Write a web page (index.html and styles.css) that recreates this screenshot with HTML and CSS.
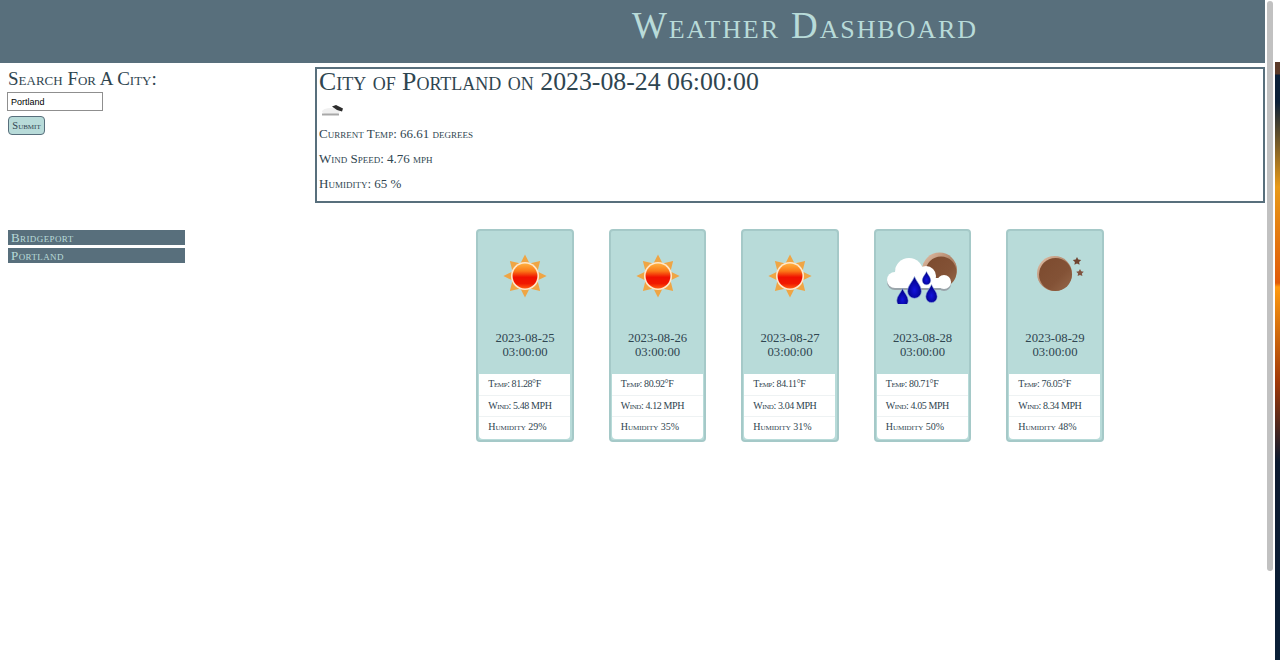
FILE: index.html
```html
<!DOCTYPE html>
<html lang="en">
<head>
<meta charset="utf-8">
<title>Weather Dashboard</title>
<link rel="stylesheet" href="styles.css">
</head>
<body>
<svg class="defs" width="0" height="0" aria-hidden="true">
  <defs>
    <linearGradient id="ball" x1="0" y1="0" x2="0" y2="1"><stop offset="0" stop-color="#ffb040"/><stop offset=".3" stop-color="#fb7a18"/><stop offset=".55" stop-color="#f01000"/><stop offset=".8" stop-color="#f01800"/><stop offset="1" stop-color="#ff5a10"/></linearGradient>
    <linearGradient id="moon" x1="0" y1="0" x2="1" y2="1"><stop offset="0" stop-color="#7c4a2e"/><stop offset=".6" stop-color="#835236"/><stop offset="1" stop-color="#96684a"/></linearGradient>
    <linearGradient id="moonrim" x1="0" y1="0" x2="1" y2="1"><stop offset="0" stop-color="#e6c4ac"/><stop offset=".5" stop-color="#b08468"/><stop offset="1" stop-color="#a87c60"/></linearGradient>
    <radialGradient id="drop" cx="50%" cy="62%" r="55%"><stop offset="0" stop-color="#1414dc"/><stop offset=".7" stop-color="#0606a0"/><stop offset="1" stop-color="#000078"/></radialGradient>
    <path id="tear" d="M0-10C2-5 6-2 6 3A6 6 0 0 1-6 3C-6-2-2-5 0-10z" fill="url(#drop)" stroke="#8fa8e0" stroke-width=".6"/>
    <symbol id="sun" viewBox="0 0 50 50">
      <g fill="#efa544">
        <path d="M25 5l4.500 9h-9z"/><path d="M25 45l4.500-9h-9z"/><path d="M5 25l9-4.500v9z"/><path d="M45 25l-9-4.500v9z"/>
        <path d="M11 11l10 2.500-7.500 7.500z"/><path d="M39 11l-10 2.500 7.500 7.500z"/><path d="M11 39l10-2.500-7.500-7.500z"/><path d="M39 39l-10-2.500 7.500-7.500z"/>
      </g>
      <circle cx="25" cy="25" r="13" fill="#ffe8cc"/>
      <circle cx="25" cy="25" r="11.500" fill="url(#ball)"/>
    </symbol>
    <symbol id="rain" viewBox="0 0 74 56">
      <circle cx="54.500" cy="22" r="17.500" fill="url(#moonrim)"/>
      <circle cx="56" cy="24" r="15.500" fill="url(#moon)"/>
      <g fill="#9aa4aa" transform="translate(0 2)">
        <circle cx="10" cy="32" r="8"/><circle cx="24" cy="24" r="14"/><circle cx="41" cy="28" r="10"/><circle cx="59" cy="34" r="7"/><rect x="10" y="30" width="50" height="10"/>
      </g>
      <g fill="#fff">
        <circle cx="10" cy="32" r="8"/><circle cx="24" cy="24" r="14"/><circle cx="41" cy="28" r="10"/><circle cx="59" cy="34" r="7"/><rect x="10" y="30" width="50" height="10"/>
      </g>
      <use href="#tear" transform="translate(17.500 50) scale(.95)"/>
      <use href="#tear" transform="translate(29.500 40) scale(1.150)"/>
      <use href="#tear" transform="translate(41.500 30.500) scale(.7)"/>
      <use href="#tear" transform="translate(46.500 46) scale(.95)"/>
    </symbol>
    <symbol id="night" viewBox="0 0 60 50">
      <circle cx="29.500" cy="22.500" r="17.500" fill="url(#moonrim)"/>
      <circle cx="30.500" cy="23.500" r="16.500" fill="url(#moon)"/>
      <path d="M52 6l1.300 2.500 2.900.4-2.100 2 .5 2.900-2.600-1.400-2.600 1.400.5-2.900-2.100-2 2.900-.4z" fill="#704430"/>
      <path d="M55 18l1.200 2.300 2.600.4-1.900 1.800.5 2.600-2.400-1.200-2.400 1.200.5-2.600-1.900-1.800 2.600-.4z" fill="#805440"/>
    </symbol>
  </defs>
</svg>
<div class="page">
  <header class="banner"><h1>Weather Dashboard</h1></header>
  <main class="layout">
    <aside class="side">
      <h2>Search For A City:</h2>
      <input class="city-input" type="text" value="Portland" aria-label="City">
      <button class="submit" type="button">Submit</button>
      <ul class="history">
        <li>Bridgeport</li>
        <li>Portland</li>
      </ul>
    </aside>
    <section class="content">
      <div class="today">
        <h2>City of Portland on 2023-08-24 06:00:00</h2>
        <svg class="today-icon" viewBox="0 0 26 18" width="26" height="18" aria-hidden="true">
          <ellipse cx="11" cy="8.500" rx="9" ry="3.500" fill="#f0f0f0"/>
          <path d="M2 11.500h17" stroke="#a8a8a8" stroke-width="2"/>
          <path d="M12 3.500l4-1.500 7 3.500-1 3-5-1.500z" fill="#2c2c2c"/>
        </svg>
        <p>Current Temp: 66.61 degrees</p>
        <p>Wind Speed: 4.76 mph</p>
        <p>Humidity: 65 %</p>
      </div>
      <div class="cards">
        <article class="card">
          <div class="card-icon"><svg width="54" height="54"><use href="#sun"/></svg></div>
          <h3>2023-08-25<br>03:00:00</h3>
          <ul><li>Temp: 81.28°F</li><li>Wind: 5.48 MPH</li><li>Humidity 29%</li></ul>
        </article>
        <article class="card">
          <div class="card-icon"><svg width="54" height="54"><use href="#sun"/></svg></div>
          <h3>2023-08-26<br>03:00:00</h3>
          <ul><li>Temp: 80.92°F</li><li>Wind: 4.12 MPH</li><li>Humidity 35%</li></ul>
        </article>
        <article class="card">
          <div class="card-icon"><svg width="54" height="54"><use href="#sun"/></svg></div>
          <h3>2023-08-27<br>03:00:00</h3>
          <ul><li>Temp: 84.11°F</li><li>Wind: 3.04 MPH</li><li>Humidity 31%</li></ul>
        </article>
        <article class="card">
          <div class="card-icon"><svg width="74" height="56"><use href="#rain"/></svg></div>
          <h3>2023-08-28<br>03:00:00</h3>
          <ul><li>Temp: 80.71°F</li><li>Wind: 4.05 MPH</li><li>Humidity 50%</li></ul>
        </article>
        <article class="card">
          <div class="card-icon"><svg width="60" height="50"><use href="#night"/></svg></div>
          <h3>2023-08-29<br>03:00:00</h3>
          <ul><li>Temp: 76.05°F</li><li>Wind: 8.34 MPH</li><li>Humidity 48%</li></ul>
        </article>
      </div>
    </section>
  </main>
</div>
<div class="scroll-thumb"></div>
<div class="wallpaper"></div>
</body>
</html>
```
FILE: styles.css
```css
html, body { margin: 0; padding: 0; height: 660px; overflow: hidden; background: #fff; }
body { font-family: "Liberation Serif", "Times New Roman", serif; font-variant: small-caps; color: #2f4550; }
.defs { position: absolute; }
.page { width: 1265px; }
.banner { height: 63px; background: #586f7c; display: flex; align-items: center; padding: 0 0 12px 632px; box-sizing: border-box; }
.banner h1 { margin: 0; font-size: 37px; letter-spacing: 1.900px; font-weight: 400; color: #b8dbd9; white-space: nowrap; }
.layout { display: grid; grid-template-columns: 315px 950px; }
.side { padding: 5px 0 0 8px; display: flex; flex-direction: column; align-items: flex-start; }
.side h2 { margin: 0 0 1px; font-size: 19px; line-height: 22px; font-weight: 400; }
.city-input { width: 96px; height: 19px; box-sizing: border-box; margin: 1px 0 0 -1px; padding: 0 3px; border: 1px solid #8f8f8f; font: 9px "Liberation Sans", Arial, sans-serif; font-variant: normal; color: #000; }
.submit { margin-top: 5px; width: 37px; height: 19px; padding: 0; background: #b8dbd9; border: 1px solid #586f7c; border-radius: 4px; font: 10.500px "Liberation Serif", serif; font-variant: small-caps; color: #2f4550; }
.history { list-style: none; margin: 95px 0 0; padding: 0; width: 177px; }
.history li { height: 15px; margin-bottom: 3px; padding-left: 3px; line-height: 16px; font-size: 13px; letter-spacing: .4px; background: #586f7c; color: #b8dbd9; }
.content { padding-top: 4px; }
.today { height: 136px; box-sizing: border-box; border: 2px solid #586f7c; padding: 0 2px; }
.today h2 { margin: -2px 0 0; font-size: 25.800px; line-height: 29px; font-weight: 400; white-space: nowrap; }
.today-icon { display: block; margin: 7px 0 0 1px; filter: blur(.6px); }
.today p { margin: 0 0 11px; font-size: 13px; line-height: 14px; }
.today-icon + p { margin-top: 6px; }
.cards { margin-top: 26px; display: flex; justify-content: center; gap: 34.900px; }
.card { width: 97.600px; height: 213px; box-sizing: border-box; background: #b8dbd9; border: 2px solid #a5c9c8; border-radius: 4px; text-align: center; display: flex; flex-direction: column; }
.card-icon { height: 90px; display: flex; align-items: center; justify-content: center; }
.card-icon svg { filter: blur(.7px); }
.card h3 { margin: 10px 0 0; font-size: 12.700px; line-height: 14px; font-weight: 400; font-variant: normal; height: 35px; }
.card ul { list-style: none; margin: 8px 1.500px 0 1px; padding: 0; background: #fff; border-radius: 0 0 4px 4px; flex: 0 0 auto; }
.card li { height: 21.500px; box-sizing: border-box; text-align: left; padding-left: 9px; font-size: 10px; line-height: 20px; border-bottom: 1px solid #eef2f3; white-space: nowrap; letter-spacing: -.4px; }
.card li:last-child { border-bottom: 0; letter-spacing: 0; }
.scroll-thumb { position: absolute; left: 1267px; top: 1px; width: 6px; height: 570px; border-radius: 3px; background: #c1c1c1; }
.wallpaper { position: absolute; left: 1275px; top: 62px; width: 5px; height: 598px; background: linear-gradient(#5a3a28 0, #5a3a28 12px, #0b2038 13px, #0b2038 40px, #e89a18 125px, #e05a08 221px, #ff9a10 225px, #a03808 320px, #0b1a30 400px, #0b2038 100%); }
```
